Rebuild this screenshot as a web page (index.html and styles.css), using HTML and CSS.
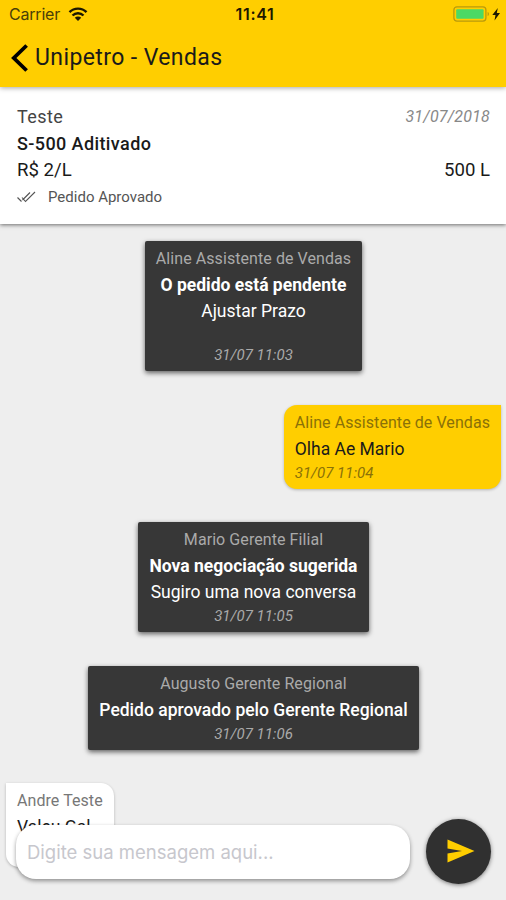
FILE: index.html
```
<!DOCTYPE html>
<html lang="pt-br">
<head>
    <meta charset="UTF-8">
    <meta name="viewport" content="width=device-width, initial-scale=1.0">
    <title>Unipetro - Vendas</title>
    <link rel="stylesheet" href="styles.css">
</head>
<body>
    <header class="topo">
        <div class="status-bar">
            <div class="operadora">
                <span>Carrier</span>
                <svg class="wifi" width="20" height="14" viewBox="0 0 20 14">
                    <path d="M1.5 5.2a12 12 0 0 1 17 0M4.5 8.5a7.8 7.8 0 0 1 11 0" fill="none" stroke="#1c1800" stroke-width="2.4"/>
                    <path d="M6.8 10.8a4.5 4.5 0 0 1 6.4 0L10 14z" fill="#1c1800"/>
                </svg>
            </div>
            <div class="hora">11:41</div>
            <div class="bateria">
                <svg width="48" height="16" viewBox="0 0 48 16">
                    <rect x="0.9" y="0.9" width="32" height="14.2" rx="3" fill="none" stroke="#b99a0c" stroke-width="1.3"/>
                    <rect x="3.2" y="3.2" width="27.4" height="9.6" rx="1" fill="#4cd964"/>
                    <path d="M34.6 6c1.8.5 1.8 3.5 0 4z" fill="#b99a0c"/>
                    <path d="M44.8 2l-5.500 7h3.200l-1 5.500 5.500-7.500h-3.200z" fill="#1c1800"/>
                </svg>
            </div>
        </div>
        <div class="titulo">
            <svg class="voltar" width="18" height="30" viewBox="0 0 18 30">
                <path d="M15.6 2.5L2.8 15l12.8 12.5" fill="none" stroke="#000" stroke-width="3.8"/>
            </svg>
            <h1>Unipetro - Vendas</h1>
        </div>
    </header>

    <section class="pedido">
        <div class="linha">
            <span class="cliente">Teste</span>
            <span class="data">31/07/2018</span>
        </div>
        <div class="linha produto">S-500 Aditivado</div>
        <div class="linha valores">
            <span>R$ 2/L</span>
            <span>500 L</span>
        </div>
        <div class="linha situacao">
            <svg width="19" height="12" viewBox="0 0 19 12">
                <path d="M0.5 6.5L4.5 10.5M5 6.5L8.5 10.5L18 1M5.5 9L13 1.5" fill="none" stroke="#555" stroke-width="1.1"/>
            </svg>
            <span>Pedido Aprovado</span>
        </div>
    </section>

    <main class="conversa">
        <div class="mensagem sistema pendente">
            <div class="autor">Aline Assistente de Vendas</div>
            <div class="texto destaque">O pedido está pendente</div>
            <div class="texto">Ajustar Prazo</div>
            <div class="horario">31/07 11:03</div>
        </div>
        <div class="mensagem enviada">
            <div class="autor">Aline Assistente de Vendas</div>
            <div class="texto">Olha Ae Mario</div>
            <div class="horario">31/07 11:04</div>
        </div>
        <div class="mensagem sistema">
            <div class="autor">Mario Gerente Filial</div>
            <div class="texto destaque">Nova negociação sugerida</div>
            <div class="texto">Sugiro uma nova conversa</div>
            <div class="horario">31/07 11:05</div>
        </div>
        <div class="mensagem sistema">
            <div class="autor">Augusto Gerente Regional</div>
            <div class="texto medio">Pedido aprovado pelo Gerente Regional</div>
            <div class="horario">31/07 11:06</div>
        </div>
        <div class="mensagem recebida">
            <div class="autor">Andre Teste</div>
            <div class="texto">Valeu Gal</div>
            <div class="horario">31/07 11:07</div>
        </div>
    </main>

    <form class="envio">
        <input type="text" placeholder="Digite sua mensagem aqui...">
        <button type="button" aria-label="Enviar">
            <svg width="28" height="24" viewBox="0 0 28 24">
                <path d="M0.5 0.5L27.5 12L0.5 23.5V14.5L15 12L0.5 9.5z" fill="#ffce00"/>
            </svg>
        </button>
    </form>
</body>
</html>
```
FILE: styles.css
```
* {
    box-sizing: border-box;
}
body {
    font-family: Roboto, Arial, sans-serif;
    margin: 0;
    height: 900px;
    overflow: hidden;
    background-color: #eeeeee;
    color: #1a1a1a;
    display: flex;
    flex-direction: column;
    position: relative;
}
.topo {
    height: 87px;
    flex: none;
    background-color: #ffce00;
    box-shadow: 0 1px 5px rgba(0, 0, 0, 0.35);
    position: relative;
    z-index: 1;
}
.status-bar {
    display: grid;
    grid-template-columns: 1fr auto 1fr;
    align-items: center;
    height: 28px;
    padding: 0 5px 0 9px;
    color: #1c1800;
    font-size: 16px;
}
.operadora {
    display: flex;
    align-items: center;
    gap: 8px;
    font-family: Inter, sans-serif;
    letter-spacing: -0.2px;
    color: #4a3f08;
}
.hora {
    font-family: Inter, sans-serif;
    font-weight: 600;
    letter-spacing: 0.7px;
}
.bateria {
    display: flex;
    justify-content: flex-end;
}
.titulo {
    display: flex;
    align-items: center;
    gap: 6px;
    height: 59px;
    padding-left: 11px;
}
.titulo h1 {
    margin: 0;
    font-size: 23px;
    font-weight: 400;
    letter-spacing: 0.4px;
}
.pedido {
    height: 137px;
    flex: none;
    padding: 16px 16px 0 17px;
    background-color: #ffffff;
    box-shadow: 0 1px 4px rgba(0, 0, 0, 0.55);
    font-size: 18px;
}
.linha {
    display: flex;
    justify-content: space-between;
    align-items: center;
    height: 26.8px;
}
.cliente {
    color: #444;
    letter-spacing: 0.4px;
}
.data {
    font-size: 16px;
    font-style: italic;
    color: #888;
    letter-spacing: 0.2px;
}
.produto {
    font-weight: 500;
    letter-spacing: 0.4px;
}
.valores {
    font-size: 18.6px;
}
.situacao {
    justify-content: flex-start;
    gap: 12px;
    font-size: 15px;
    color: #555;
}
.conversa {
    flex: 1;
    display: flex;
    flex-direction: column;
    gap: 33.6px;
    padding: 17px 5px 0 6px;
}
.mensagem {
    flex: none;
    padding: 5px 11px;
    font-size: 17.5px;
    box-shadow: 0 1px 3px rgba(0, 0, 0, 0.25);
}
.autor {
    height: 26px;
    line-height: 26px;
    font-size: 16px;
    letter-spacing: 0.07px;
}
.texto {
    height: 26px;
    line-height: 26px;
}
.horario {
    height: 22px;
    line-height: 22px;
    font-size: 15px;
    font-style: italic;
}
.sistema {
    align-self: center;
    background-color: #373737;
    color: #ffffff;
    border-radius: 2px;
    text-align: center;
    box-shadow: 0 2px 5px rgba(0, 0, 0, 0.6);
}
.sistema .autor, .sistema .horario {
    color: #aaaaaa;
}
.sistema .destaque {
    font-weight: 700;
}
.sistema .medio {
    font-weight: 500;
}
.pendente .horario {
    margin-top: 20px;
}
.enviada {
    align-self: flex-end;
    background-color: #ffce00;
    border-radius: 13px 0 13px 13px;
}
.enviada .autor, .enviada .horario {
    color: #8a7108;
}
.recebida {
    align-self: flex-start;
    background-color: #ffffff;
    border-radius: 0 13px 13px 13px;
}
.recebida .autor, .recebida .horario {
    color: #777;
}
/* barra de envio fica por cima da conversa */
.envio {
    position: absolute;
    left: 16px;
    right: 15px;
    bottom: 16px;
    display: flex;
    align-items: center;
    justify-content: space-between;
}
.envio input {
    width: 394px;
    height: 54px;
    padding: 0 11px;
    border: none;
    border-radius: 20px;
    background-color: #ffffff;
    box-shadow: 0 2px 4px rgba(0, 0, 0, 0.4);
    font-family: Inter, sans-serif;
    font-size: 18.5px;
}
.envio input::placeholder {
    color: #c7c7cd;
}
.envio button {
    width: 65px;
    height: 65px;
    padding: 0 0 2px 4px;
    border: none;
    border-radius: 50%;
    background-color: #303030;
    box-shadow: 0 1px 4px rgba(0, 0, 0, 0.5);
    display: flex;
    align-items: center;
    justify-content: center;
}
```
